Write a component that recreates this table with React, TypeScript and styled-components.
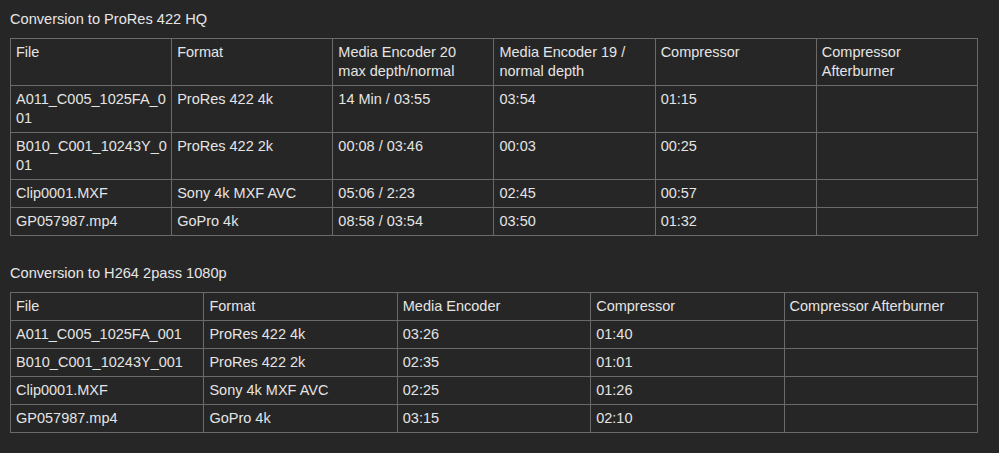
import React from "react";
import styled, { createGlobalStyle } from "styled-components";

const GlobalStyle = createGlobalStyle`
  html, body {
    margin: 0;
    background: #262626;
  }
  body {
    font-family: "Liberation Sans", Arial, sans-serif;
    color: #e4e4e4;
  }
`;

const Page = styled.div`
  padding: 10px 22px 20px 10px;
  display: flex;
  flex-direction: column;
`;

const Title = styled.div<{ $gap: number }>`
  font-size: 14.6px;
  line-height: 19px;
  margin-top: ${({ $gap }) => $gap}px;
  margin-bottom: 9px;
  color: #e6e6e6;
`;

const Table = styled.table`
  width: 968px;
  border-collapse: collapse;
  table-layout: fixed;
  font-size: 14.5px;
  line-height: 19px;
`;

const Cell = styled.td`
  border: 1px solid #6a6a6a;
  padding: 4px 3px 4px 5px;
  vertical-align: top;
  overflow-wrap: anywhere;
  color: #e4e4e4;
  font-weight: normal;
  text-align: left;
`;

const HeadCell = styled(Cell).attrs({ as: "th" })`
  padding-right: 10px;
`;

interface Section {
  title: string;
  headers: string[];
  rows: string[][];
}

const sections: Section[] = [
  {
    title: "Conversion to ProRes 422 HQ",
    headers: [
      "File",
      "Format",
      "Media Encoder 20 max depth/normal",
      "Media Encoder 19 / normal depth",
      "Compressor",
      "Compressor Afterburner",
    ],
    rows: [
      ["A011_C005_1025FA_001", "ProRes 422 4k", "14 Min / 03:55", "03:54", "01:15", ""],
      ["B010_C001_10243Y_001", "ProRes 422 2k", "00:08 / 03:46", "00:03", "00:25", ""],
      ["Clip0001.MXF", "Sony 4k MXF AVC", "05:06 / 2:23", "02:45", "00:57", ""],
      ["GP057987.mp4", "GoPro 4k", "08:58 / 03:54", "03:50", "01:32", ""],
    ],
  },
  {
    title: "Conversion to H264 2pass 1080p",
    headers: ["File", "Format", "Media Encoder", "Compressor", "Compressor Afterburner"],
    rows: [
      ["A011_C005_1025FA_001", "ProRes 422 4k", "03:26", "01:40", ""],
      ["B010_C001_10243Y_001", "ProRes 422 2k", "02:35", "01:01", ""],
      ["Clip0001.MXF", "Sony 4k MXF AVC", "02:25", "01:26", ""],
      ["GP057987.mp4", "GoPro 4k", "03:15", "02:10", ""],
    ],
  },
];

export default function App() {
  return (
    <Page>
      <GlobalStyle />
      {sections.map((s, si) => (
        <React.Fragment key={s.title}>
          <Title $gap={si === 0 ? 0 : 28}>{s.title}</Title>
          <Table>
            <thead>
              <tr>
                {s.headers.map((h) => (
                  <HeadCell key={h}>{h}</HeadCell>
                ))}
              </tr>
            </thead>
            <tbody>
              {s.rows.map((r, ri) => (
                <tr key={ri}>
                  {r.map((c, ci) => (
                    <Cell key={ci}>{c}</Cell>
                  ))}
                </tr>
              ))}
            </tbody>
          </Table>
        </React.Fragment>
      ))}
    </Page>
  );
}
